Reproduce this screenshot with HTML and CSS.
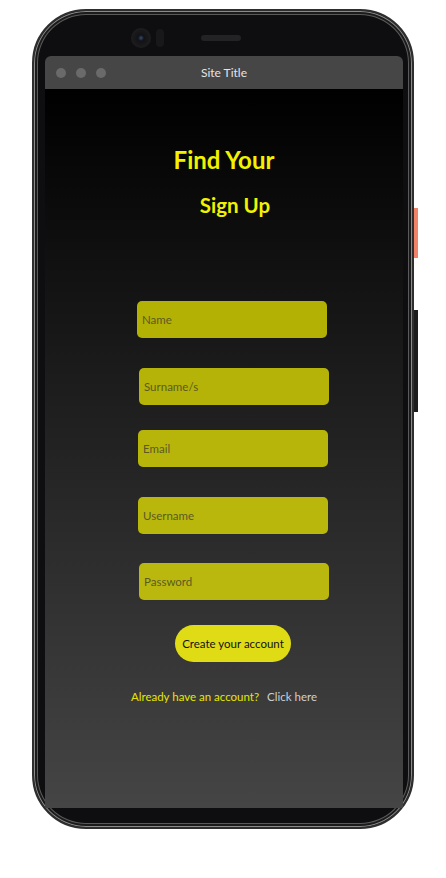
FILE: index.html
```html
<!DOCTYPE html>
<html lang="en">
<head>
    <meta charset="UTF-8">
    <meta name="viewport" content="width=device-width, initial-scale=1.0">
    <title>Sign Up</title>
    <link rel="stylesheet" href="styles.css">
</head>
<body>
    <div class="phone">
        <span class="side-btn power"></span>
        <span class="side-btn volume"></span>
        <div class="phone-top">
            <span class="camera"></span>
            <span class="sensor"></span>
            <span class="speaker"></span>
        </div>
        <div class="window">
            <div class="titlebar">
                <div class="dots">
                    <span></span><span></span><span></span>
                </div>
                <div class="site-title">Site Title</div>
            </div>
            <div class="content">
                <h1>Find Your</h1>
                <h2>Sign Up</h2>
                <form class="signup">
                    <input type="text" class="field f-name" placeholder="Name">
                    <input type="text" class="field f-surname" placeholder="Surname/s">
                    <input type="email" class="field f-email" placeholder="Email">
                    <input type="text" class="field f-user" placeholder="Username">
                    <input type="password" class="field f-pass" placeholder="Password">
                    <button type="button" class="create">Create your account</button>
                </form>
                <p class="login">Already have an account? <a href="#">Click here</a></p>
            </div>
        </div>
    </div>
</body>
</html>
```

FILE: styles.css
```css
body {
    margin: 0;
    background: #fff;
    font-family: 'Lato', 'Open Sans', sans-serif;
}

.phone {
    position: relative;
    box-sizing: border-box;
    width: 382px;
    height: 820px;
    margin: 9px 0 0 32px;
    padding: 0 10px 0 11px;
    background: #0e0e10;
    border: 2px solid #2e2e2e;
    border-radius: 54px;
    box-shadow: inset 0 0 0 1px #8a8a8a, inset 0 0 0 3px #1b1b1b, inset 0 0 0 4px #5a5a5a;
}

.side-btn {
    position: absolute;
    right: -6px;
    width: 4px;
}

.side-btn.power {
    top: 197px;
    height: 50px;
    background: #f0836a;
}

.side-btn.volume {
    top: 299px;
    height: 102px;
    background: #1c1c1c;
}

.phone-top {
    display: flex;
    align-items: center;
    height: 45px;
    padding-left: 86px;
}

.camera {
    width: 20px;
    height: 20px;
    border-radius: 50%;
    background: radial-gradient(circle, #3b4a6a 0, #10131a 3px, #141416 4px, #1d1d20 10px);
    margin-top: 8px;
}

.sensor {
    width: 8px;
    height: 18px;
    margin: 8px 0 0 5px;
    border-radius: 4px;
    background: #18181b;
}

.speaker {
    width: 40px;
    height: 6px;
    margin: 8px 0 0 37px;
    border-radius: 3px;
    background: #232326;
}

.window {
    width: 358px;
    height: 752px;
    display: flex;
    flex-direction: column;
    border-radius: 6px 6px 0 0;
    overflow: hidden;
}

.titlebar {
    display: flex;
    align-items: center;
    height: 33px;
    background: #464646;
    position: relative;
}

.dots {
    display: flex;
    gap: 10px;
    padding-left: 11px;
}

.dots span {
    width: 10px;
    height: 10px;
    border-radius: 50%;
    background: #6a6a6a;
}

.site-title {
    position: absolute;
    left: 0;
    right: 0;
    text-align: center;
    color: #e4e4e4;
    font-size: 12px;
}

.content {
    flex: 1;
    display: flex;
    flex-direction: column;
    align-items: center;
    background: linear-gradient(#000, #454545);
}

h1 {
    margin: 56px 0 0;
    font-size: 24px;
    font-weight: 700;
    color: #f2f200;
}

h2 {
    margin: 19px 0 0 22px;
    font-size: 20.5px;
    font-weight: 700;
    color: #f2f200;
}

.signup {
    display: flex;
    flex-direction: column;
    align-items: center;
    margin: 84px 0 0 16px;
}

.field {
    box-sizing: border-box;
    width: 190px;
    height: 37px;
    padding: 0 5px;
    border: none;
    border-radius: 5px;
    background: #b3b104;
    font-family: 'Lato', sans-serif;
    font-size: 11.5px;
    outline: none;
}

.field::placeholder {
    color: #5b5a22;
}

.f-surname {
    margin: 30px 0 0 4px;
    background: #b5b307;
}

.f-email {
    margin: 25px 0 0 2px;
    background: #b7b50a;
}

.f-user {
    margin: 30px 0 0 2px;
    background: #b9b70c;
}

.f-pass {
    margin: 29px 0 0 4px;
    background: #bab80e;
}

.create {
    height: 37px;
    margin: 25px 0 0 2px;
    padding: 0 7px;
    border: none;
    border-radius: 19px;
    background: #dfdc16;
    color: #111;
    font-family: 'Lato', sans-serif;
    font-size: 11.5px;
    cursor: pointer;
}

.login {
    margin: 28px 0 0 0;
    font-family: 'Lato', sans-serif;
    font-size: 11.5px;
    color: #e6e600;
}

.login a {
    margin-left: 5px;
    color: #cfcfcf;
    text-decoration: none;
}
```
